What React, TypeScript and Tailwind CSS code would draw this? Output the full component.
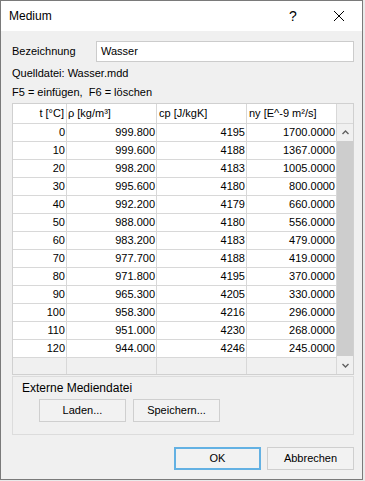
const rows = [
  ["0", "999.800", "4195", "1700.0000"],
  ["10", "999.600", "4188", "1367.0000"],
  ["20", "998.200", "4183", "1005.0000"],
  ["30", "995.600", "4180", "800.0000"],
  ["40", "992.200", "4179", "660.0000"],
  ["50", "988.000", "4180", "556.0000"],
  ["60", "983.200", "4183", "479.0000"],
  ["70", "977.700", "4188", "419.0000"],
  ["80", "971.800", "4195", "370.0000"],
  ["90", "965.300", "4205", "330.0000"],
  ["100", "958.300", "4216", "296.0000"],
  ["110", "951.000", "4230", "268.0000"],
  ["120", "944.000", "4246", "245.0000"],
];

function TitleBar() {
  return (
    <div className="flex items-center h-[30px] bg-white shrink-0" data-name="Title Bar">
      <p className="flex-1 pl-[8px] text-[12px] text-black">Medium</p>
      <div className="w-[46px] h-full flex items-center justify-center text-[14px] text-black">?</div>
      <div className="w-[46px] h-full flex items-center justify-center">
        <svg width="10" height="10" viewBox="0 0 10 10">
          <path d="M0 0 L10 10 M10 0 L0 10" stroke="#000" strokeWidth="1" />
        </svg>
      </div>
    </div>
  );
}

function Chevron({ up }: { up?: boolean }) {
  return (
    <svg width="7" height="5" viewBox="0 0 7 5">
      <path d={up ? "M0.5 4 L3.5 1 L6.5 4" : "M0.5 1 L3.5 4 L6.5 1"} stroke="#606060" strokeWidth="1.4" fill="none" />
    </svg>
  );
}

function DataGrid() {
  return (
    <div className="flex w-[342px] border border-[#d0d0d0] text-[11px] text-black leading-none" data-name="Grid">
      <div className="flex flex-col">
        <div className="flex h-[20px] border-b border-[#d8d8d8] bg-white">
          <div className="w-[54px] border-r border-[#d8d8d8] flex items-center justify-end pr-[2px]">t [°C]</div>
          <div className="w-[90px] border-r border-[#d8d8d8] flex items-center pl-[1px]">ρ [kg/m³]</div>
          <div className="w-[90px] border-r border-[#d8d8d8] flex items-center pl-[2px]">cp [J/kgK]</div>
          <div className="w-[90px] border-r border-[#d8d8d8] flex items-center pl-[2px]">ny [E^-9 m²/s]</div>
        </div>
        {rows.map((r) => (
          <div key={r[0]} className="flex h-[18px] border-b border-[#d8d8d8] bg-white">
            <div className="w-[54px] border-r border-[#d8d8d8] flex items-center justify-end pr-[1px]">{r[0]}</div>
            <div className="w-[90px] border-r border-[#d8d8d8] flex items-center justify-end pr-[1px]">{r[1]}</div>
            <div className="w-[90px] border-r border-[#d8d8d8] flex items-center justify-end pr-[1px]">{r[2]}</div>
            <div className="w-[90px] border-r border-[#d8d8d8] flex items-center justify-end pr-[1px]">{r[3]}</div>
          </div>
        ))}
        <div className="flex h-[16px] bg-[#f0f0f0]">
          <div className="w-[54px] border-r border-[#d8d8d8]" />
          <div className="w-[90px] border-r border-[#d8d8d8]" />
          <div className="w-[90px] border-r border-[#d8d8d8]" />
          <div className="w-[90px] border-r border-[#d8d8d8]" />
        </div>
      </div>
      <div className="flex flex-col w-[16px] bg-[#f0f0f0]" data-name="Scrollbar">
        <div className="h-[20px] border-b border-[#d8d8d8]" />
        <div className="h-[17px] flex items-center justify-center">
          <Chevron up />
        </div>
        <div className="h-[215px] mx-[0px] bg-[#cdcdcd]" />
        <div className="flex-1 flex items-center justify-center">
          <Chevron />
        </div>
      </div>
    </div>
  );
}

function Button({ label, primary }: { label: string; primary?: boolean }) {
  return (
    <div
      className={
        primary
          ? "w-[87px] h-[23px] flex items-center justify-center border-2 border-[#63b1e3] bg-[#f2f2f2] text-[11px] text-black"
          : "w-[87px] h-[23px] flex items-center justify-center border border-[#cfcfcf] bg-[#f2f2f2] text-[11px] text-black"
      }
    >
      {label}
    </div>
  );
}

export default function App() {
  return (
    <div className="w-[365px] h-[481px] bg-[#eaeaea]">
      <div className="w-[363px] h-[480px] border border-[#7a7a7a] bg-[#f0f0f0] flex flex-col font-['Liberation_Sans',Arial,sans-serif] text-black" data-name="Dialog">
        <TitleBar />
        <div className="flex flex-col pl-[11px] text-[11px]">
          <div className="flex items-center mt-[10px]">
            <p className="w-[84px]">Bezeichnung</p>
            <div className="w-[258px] h-[21px] border border-[#cccccc] bg-white flex items-center pl-[4px]">Wasser</div>
          </div>
          <p className="mt-[4px] leading-[14px]">Quelldatei: Wasser.mdd</p>
          <p className="mt-[5px] leading-[14px]">F5 = einfügen,&nbsp; F6 = löschen</p>
          <div className="mt-[4px]">
            <DataGrid />
          </div>
          <div className="mt-[1px] w-[342px] h-[59px] border border-[#dcdcdc] flex flex-col pl-[9px]" data-name="Group">
            <p className="mt-[4px] text-[12px] leading-[14px]">Externe Mediendatei</p>
            <div className="flex gap-[7px] mt-[4px] pl-[17px]">
              <Button label="Laden..." />
              <Button label="Speichern..." />
            </div>
          </div>
          <div className="flex justify-end gap-[6px] mt-[12px] w-[342px]">
            <Button label="OK" primary />
            <Button label="Abbrechen" />
          </div>
        </div>
      </div>
    </div>
  );
}
